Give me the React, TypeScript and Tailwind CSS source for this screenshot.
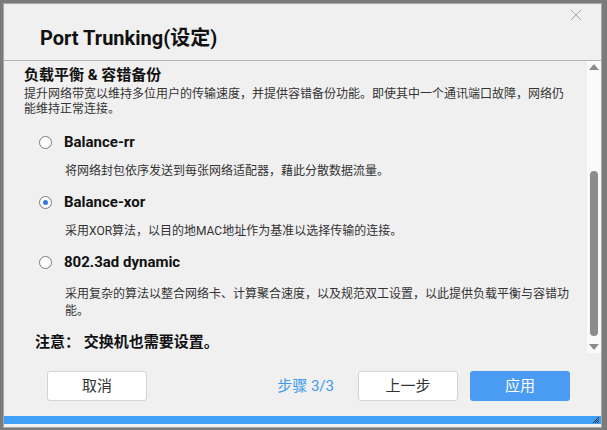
import { X } from 'lucide-react'

const font = { fontFamily: 'Roboto, "Noto Sans CJK SC", sans-serif' }

interface Mode {
  name: string
  desc: string[]
  checked?: boolean
}

const modes: Mode[] = [
  { name: 'Balance-rr', desc: ['将网络封包依序发送到每张网络适配器，藉此分散数据流量。'] },
  { name: 'Balance-xor', desc: ['采用XOR算法，以目的地MAC地址作为基准以选择传输的连接。'], checked: true },
  {
    name: '802.3ad dynamic',
    desc: ['采用复杂的算法以整合网络卡、计算聚合速度，以及规范双工设置，以此提供负载平衡与容错功', '能。'],
  },
]

function Radio({ checked }: { checked?: boolean }) {
  return (
    <span className="flex h-[13px] w-[13px] items-center justify-center rounded-full border border-[#7a7a7a] bg-white">
      {checked && <span className="h-[5px] w-[5px] rounded-full bg-[#2f7de1]" />}
    </span>
  )
}

export default function App() {
  return (
    <div className="flex h-[430px] w-[607px] flex-col bg-[#7b7b7b] pb-[2px] pl-[3px] pr-[5px] pt-[3px]" style={font}>
      <div className="relative flex flex-1 flex-col border border-[#a8a8a8] bg-[#f0f0f0]">
        {/* Close */}
        <button className="absolute right-[15px] top-[1px] text-[#9a9a9a]">
          <X size={20} strokeWidth={1} />
        </button>

        {/* Header */}
        <div className="h-[57px] border-b border-[#b3b3b3] pl-[36px] pt-[22px]">
          <h1 className="text-[20px] font-bold leading-[24px] text-[#111]">Port Trunking(设定)</h1>
        </div>

        {/* Body */}
        <div className="flex h-[292px]">
          <div className="flex-1 overflow-hidden pl-[20px] pr-[14px]">
            <h2 className="mt-[4px] text-[15px] font-bold leading-[20px] text-[#111]">负载平衡 &amp; 容错备份</h2>
            <p className="mt-[2px] text-[12px] leading-[15px] text-[#333]">
              提升网络带宽以维持多位用户的传输速度，并提供容错备份功能。即使其中一个通讯端口故障，网络仍能维持正常连接。
            </p>

            <div className="mt-[15px] flex flex-col gap-[12px] pl-[15px]">
              {modes.map((m, i) => (
                <div key={m.name} className="flex flex-col">
                  <label className="flex items-center gap-[12px]">
                    <Radio checked={m.checked} />
                    <span className="text-[15px] font-bold leading-[20px] text-[#111]">{m.name}</span>
                  </label>
                  <div
                    className={
                      i === 2
                        ? 'mt-[14px] pl-[26px] text-[12px] leading-[17px] text-[#333]'
                        : 'mt-[11px] pl-[26px] text-[12px] leading-[17px] text-[#333]'
                    }
                  >
                    {m.desc.map(line => (
                      <div key={line}>{line}</div>
                    ))}
                  </div>
                </div>
              ))}
            </div>

            <p className="mt-[12px] pl-[11px] text-[15px] font-bold leading-[20px] text-[#111]">
              注意：&nbsp;交换机也需要设置。
            </p>
          </div>

          {/* Scrollbar */}
          <div className="flex w-[14px] flex-col items-center bg-[#fafafa] py-[3px]">
            <span className="h-0 w-0 border-x-[5px] border-b-[6px] border-x-transparent border-b-[#8a8a8a]" />
            <div className="flex flex-1 flex-col justify-end pb-[8px] pt-[2px]">
              <div className="h-[165px] w-[8px] rounded-full bg-[#8c8c8c]" />
            </div>
            <span className="h-0 w-0 border-x-[5px] border-t-[6px] border-x-transparent border-t-[#8a8a8a]" />
          </div>
        </div>

        {/* Footer */}
        <div className="flex items-center pl-[43px] pr-[31px] pt-[18px]">
          <button className="h-[30px] w-[100px] rounded-[3px] border border-[#d3d3d3] bg-white text-[15px] text-[#333]">
            取消
          </button>
          <span className="ml-auto mr-[24px] text-[15px] text-[#3d9bef]">步骤 3/3</span>
          <button className="h-[30px] w-[100px] rounded-[3px] border border-[#d3d3d3] bg-white text-[15px] text-[#333]">
            上一步
          </button>
          <button className="ml-[12px] h-[30px] w-[100px] rounded-[3px] bg-[#4a9cf2] text-[15px] text-white">
            应用
          </button>
        </div>

        <div className="mt-auto mb-[3px] flex h-[8px] items-center justify-end bg-[#3ea1f7] pr-[2px]">
          <svg width="6" height="6" viewBox="0 0 6 6" className="text-[#333]">
            <path d="M6 0 L0 6 M6 2 L2 6 M6 4 L4 6" stroke="currentColor" strokeWidth="1" />
          </svg>
        </div>
      </div>
    </div>
  )
}
